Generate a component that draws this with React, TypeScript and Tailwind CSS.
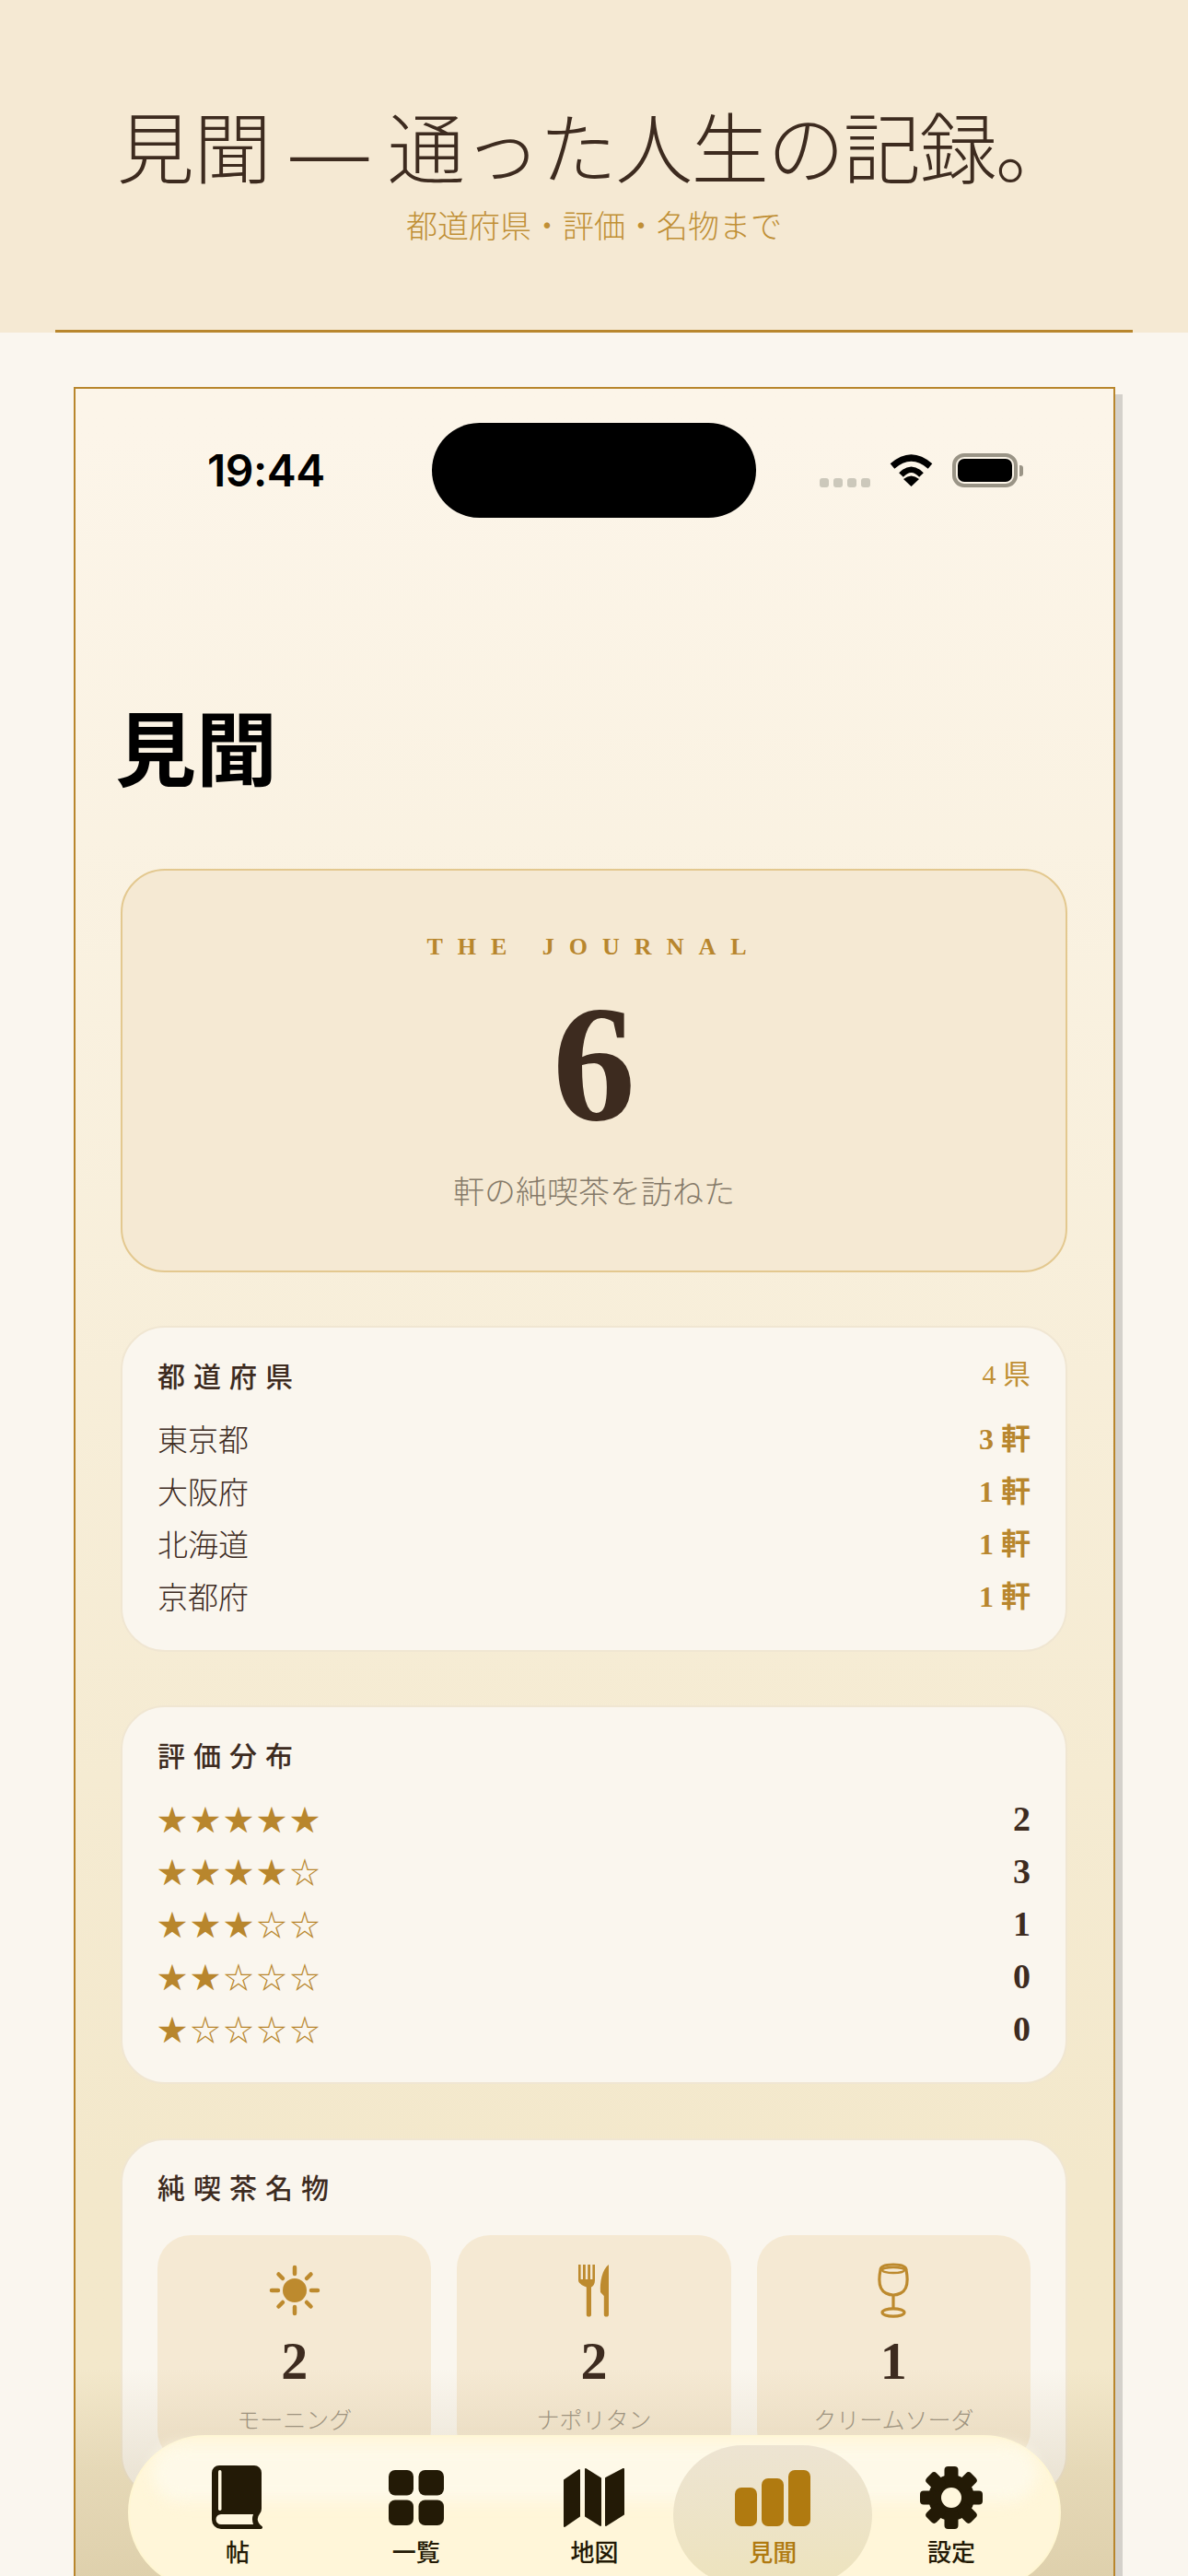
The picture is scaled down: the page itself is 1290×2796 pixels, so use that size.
const serif = "font-['Liberation_Serif','Noto_Sans_CJK_JP',serif]"
const sans = "font-['Noto_Sans_CJK_JP','Liberation_Sans',sans-serif]"

const prefectures = [
  { name: '東京都', count: '3 軒' },
  { name: '大阪府', count: '1 軒' },
  { name: '北海道', count: '1 軒' },
  { name: '京都府', count: '1 軒' },
]

const ratings = [
  { stars: 5, count: 2 },
  { stars: 4, count: 3 },
  { stars: 3, count: 1 },
  { stars: 2, count: 0 },
  { stars: 1, count: 0 },
]

const SunIcon = () => (
  <svg width="56" height="56" viewBox="0 0 56 56" fill="#bd8a2e">
    <circle cx="28" cy="28" r="13" />
    <g stroke="#bd8a2e" strokeWidth="4.5" strokeLinecap="round">
      <path d="M28 3v7M28 46v7M3 28h7M46 28h7M10.5 10.5l4.5 4.5M41 41l4.5 4.5M45.5 10.5L41 15M15 41l-4.5 4.5" />
    </g>
  </svg>
)

const CutleryIcon = () => (
  <svg width="33" height="58" viewBox="0 0 33 58" fill="#bd8a2e">
    <path d="M0 1h2.6v16h2.4V1h2.8v16h2.4V1h2.800v16h2.400V1H18v17c0 4-2 6.500-4 7.500V55a2.600 2.600 0 0 1-5.200 0V25.500C6.500 24.500 0 22 0 18z" />
    <path d="M33 1v54a2.600 2.600 0 0 1-5.200 0V35l-3.800-4c-1-11 2-25 9-30z" />
  </svg>
)

const GlassIcon = () => (
  <svg width="38" height="60" viewBox="0 0 38 60" fill="none" stroke="#bd8a2e" strokeWidth="3.200">
    <path d="M5 8Q5 2 19 2Q33 2 33 8Q37 28 27 33Q19 37 11 33Q1 28 5 8Z" />
    <ellipse cx="19" cy="8" rx="12" ry="3" strokeWidth="2.400" />
    <path d="M19 36V50" />
    <ellipse cx="19" cy="54" rx="12" ry="4.200" />
  </svg>
)

const BookIcon = () => (
  <svg width="55" height="70" viewBox="0 0 55 70">
    <path
      fill="#231a06"
      d="M8 0H46a8 8 0 0 1 8 8V47q0 3-2 5.500q-4 5-1 10q1.500 2 3.500 3.500q1.500 2-1 3H10a10 10 0 0 1-10-10V8a8 8 0 0 1 8-8Z"
    />
    <path fill="#fff7df" d="M10 53H45Q43 58 45 64H10a5.500 5.500 0 0 1 0-11Z" />
    <rect x="7" y="5" width="3.500" height="44" rx="1.700" fill="#fff7df" />
  </svg>
)

const GridIcon = () => (
  <svg width="60" height="60" viewBox="0 0 60 60" fill="#231a06">
    <rect x="0" y="0" width="27" height="27.500" rx="7" />
    <rect x="32.500" y="0" width="27.500" height="27.500" rx="7" />
    <rect x="0" y="32.500" width="27" height="27.500" rx="7" />
    <rect x="32.500" y="32.500" width="27.500" height="27.500" rx="7" />
  </svg>
)

const MapIcon = () => (
  <svg width="66" height="64" viewBox="0 0 66 64" fill="#231a06" stroke="#231a06" strokeWidth="2" strokeLinejoin="round">
    <path d="M1 13L17 2V52L1 63Z" />
    <path d="M24 1L40 11V62L24 52Z" />
    <path d="M46 11L65 1V50L46 62Z" />
  </svg>
)

const ChartIcon = () => (
  <svg width="82" height="61" viewBox="0 0 82 61" fill="#b07a10">
    <rect x="0" y="19" width="24" height="42" rx="7" />
    <rect x="29" y="9" width="24" height="52" rx="7" />
    <rect x="58" y="0" width="24" height="61" rx="7" />
  </svg>
)

const GearIcon = () => (
  <svg width="68" height="68" viewBox="0 0 68 68" fill="#231a06">
    <circle cx="34" cy="34" r="25" />
    {[0, 45, 90, 135, 180, 225, 270, 315].map((a) => (
      <rect key={a} x="26.500" y="0" width="15" height="20" rx="4" transform={`rotate(${a} 34 34)`} />
    ))}
    <circle cx="34" cy="34" r="11" fill="#fff7dd" />
  </svg>
)

const WifiIcon = () => (
  <svg width="47" height="36" viewBox="0 0 47 36" fill="none" stroke="#000">
    <path d="M3 13Q23.500-5 44 13" strokeWidth="7" />
    <path d="M12.500 22.500Q23.500 11 34.500 22.500" strokeWidth="6.500" />
    <path d="M23.500 35L15 27Q23.500 20 32 27Z" fill="#000" stroke="none" />
  </svg>
)

const navItems = [
  { label: '帖', icon: <BookIcon /> },
  { label: '一覧', icon: <GridIcon /> },
  { label: '地図', icon: <MapIcon /> },
  { label: '見聞', icon: <ChartIcon />, active: true },
  { label: '設定', icon: <GearIcon /> },
]

const tiles = [
  { icon: <SunIcon />, count: 2, label: 'モーニング' },
  { icon: <CutleryIcon />, count: 2, label: 'ナポリタン' },
  { icon: <GlassIcon />, count: 1, label: 'クリームソーダ' },
]

const CardTitle = ({ children }: { children: string }) => (
  <h2 className={`${sans} h-10 text-[30px] leading-10 font-medium tracking-[9px] text-[#3d2b1f]`}>{children}</h2>
)

export default function App() {
  return (
    <div className={`${sans} h-[2796px] w-[1290px] overflow-hidden bg-[#faf6ef]`}>
      <header className="h-[361px] bg-[#f5e9d3]">
        <div className="mx-[60px] flex h-full flex-col items-center border-b-[3px] border-[#b8862d] pt-[120px]">
          <h1 className={`${serif} h-[90px] text-[84px] leading-[90px] font-light whitespace-nowrap text-[#3d2b1f]`}>
            見聞 — <span className="tracking-[-1.5px]">通った人生の記録。</span>
          </h1>
          <p className="mt-[9px] text-[34px] leading-[50px] font-light text-[#c08f35]">都道府県・評価・名物まで</p>
        </div>
      </header>

      <div className="mt-[59px] ml-[80px] h-[2500px] w-[1131px] border-2 border-[#b8862d] shadow-[8px_8px_0_rgba(0,0,0,0.15)]">
        <div className="relative h-full overflow-hidden bg-gradient-to-b from-[#fcf5e9] from-[2%] to-[#f3e8cb] to-[78%]">
          <div className="flex pt-[37px]">
            <div className="w-[387px] pt-[17px] pl-[143px] font-['Inter',sans-serif] text-[48px] leading-[70px] font-semibold tracking-[-0.5px] text-black">
              19:44
            </div>
            <div className="h-[103px] w-[352px] rounded-[52px] bg-black" />
            <div className="mt-[34px] flex h-[36px] items-end pl-[69px]">
              <div className="flex gap-[5px]">
                <span className="h-[10px] w-[10px] rounded-[3px] bg-[#ccc8bb]" />
                <span className="h-[10px] w-[10px] rounded-[3px] bg-[#ccc8bb]" />
                <span className="h-[10px] w-[10px] rounded-[3px] bg-[#ccc8bb]" />
                <span className="h-[10px] w-[10px] rounded-[3px] bg-[#ccc8bb]" />
              </div>
              <div className="ml-[21px]">
                <WifiIcon />
              </div>
              <div className="ml-[21px] flex items-center">
                <div className="h-[37px] w-[71px] rounded-[13px] border-[4px] border-[#9a9486] p-[2px]">
                  <div className="h-full w-full rounded-[7px] bg-black" />
                </div>
                <div className="ml-[2px] h-[12px] w-[4px] rounded-r-[3px] bg-[#9a9486]" />
              </div>
            </div>
          </div>

          <div className="pr-[50px] pl-[49px]">
            <h1 className="mt-[191px] ml-[-6px] h-[110px] text-[88px] leading-[110px] font-bold text-black">見聞</h1>

            <section className="mt-[80px] flex h-[438px] flex-col items-center rounded-[48px] border-2 border-[#e3c88f] bg-[#f5e9d3] pt-[63px]">
              <p className={`${serif} h-[40px] text-[26px] leading-[40px] font-bold tracking-[16px] text-[#b8862d]`}>
                THE JOURNAL
              </p>
              <p className={`${serif} mt-[15px] h-[184px] text-[180px] leading-[184px] font-bold text-[#3d2b1f]`}>6</p>
              <p className="mt-[20px] h-[50px] text-[34px] leading-[50px] font-light text-[#857a69]">軒の純喫茶を訪ねた</p>
            </section>

            <section className="mt-[58px] rounded-[48px] border-2 border-[#f0e6d2] bg-[#faf6ee] px-[38px] pt-[31px] pb-[30px]">
              <div className="flex items-center justify-between">
                <CardTitle>都道府県</CardTitle>
                <span className={`${serif} text-[30px] leading-10 text-[#c08f35]`}>4 県</span>
              </div>
              <ul className="mt-[21px]">
                {prefectures.map((p) => (
                  <li key={p.name} className="flex h-[57px] items-center justify-between">
                    <span className="text-[33px] font-light text-[#3d2b1f]">{p.name}</span>
                    <span className={`${serif} text-[32px] font-bold text-[#b8862d]`}>{p.count}</span>
                  </li>
                ))}
              </ul>
            </section>

            <section className="mt-[58px] rounded-[48px] border-2 border-[#f0e6d2] bg-[#faf6ee] px-[38px] pt-[31px] pb-[29px]">
              <CardTitle>評価分布</CardTitle>
              <ul className="mt-[22px]">
                {ratings.map((r) => (
                  <li key={r.stars} className="flex h-[57px] items-center justify-between">
                    <span className="mb-[2px] text-[32px] leading-[55px] tracking-[4px] text-[#b8862d]">
                      {'★'.repeat(r.stars) + '☆'.repeat(5 - r.stars)}
                    </span>
                    <span className={`${serif} text-[38px] font-bold text-[#3d2b1f]`}>{r.count}</span>
                  </li>
                ))}
              </ul>
            </section>

            <section className="mt-[59px] rounded-[48px] border-2 border-[#f0e6d2] bg-[#faf6ee] px-[38px] pt-[30px] pb-[36px]">
              <CardTitle>純喫茶名物</CardTitle>
              <div className="mt-[33px] grid grid-cols-3 gap-[28px]">
                {tiles.map((t) => (
                  <div key={t.label} className="flex h-[248px] flex-col items-center rounded-[36px] bg-[#f5e9d3] pt-[30px]">
                    <div className="flex h-[60px] items-center">{t.icon}</div>
                    <p className={`${serif} mt-[17px] h-[60px] text-[58px] leading-[60px] font-bold text-[#3d2b1f]`}>{t.count}</p>
                    <p className="mt-[14px] text-[25px] leading-[36px] font-light text-[#a09685]">{t.label}</p>
                  </div>
                ))}
              </div>
            </section>
          </div>

          {/* fade behind the tab bar */}
          <div className="absolute top-[2148px] right-0 left-0 h-[230px] bg-gradient-to-b from-[rgba(120,90,20,0)] via-[rgba(120,90,20,0.11)] via-[48%] to-[rgba(120,90,20,0.17)]" />

          <nav className="absolute top-[2221px] left-[57px] grid h-[168px] w-[1013px] grid-cols-5 rounded-[84px] border-2 border-[#fff6d2] bg-[#fff6d9] px-[20px]">
            <div className="absolute top-[8px] right-[24px] left-[24px] h-[62px] rounded-[40px] bg-[#fef9e8] blur-[8px]" />
            {navItems.map((item) => (
              <div key={item.label} className="relative flex flex-col items-center pt-[31px]">
                {item.active && (
                  <div className="absolute top-[9px] left-[-11px] h-[152px] w-[216px] rounded-[76px] bg-gradient-to-b from-[#ede4d2] to-[#ede3bd]" />
                )}
                <div className="relative flex h-[70px] items-center">{item.icon}</div>
                <span
                  className={`relative mt-[9px] text-[26px] leading-[28px] font-medium ${
                    item.active ? 'text-[#b07a10]' : 'text-[#231a06]'
                  }`}
                >
                  {item.label}
                </span>
              </div>
            ))}
          </nav>
        </div>
      </div>
    </div>
  )
}
